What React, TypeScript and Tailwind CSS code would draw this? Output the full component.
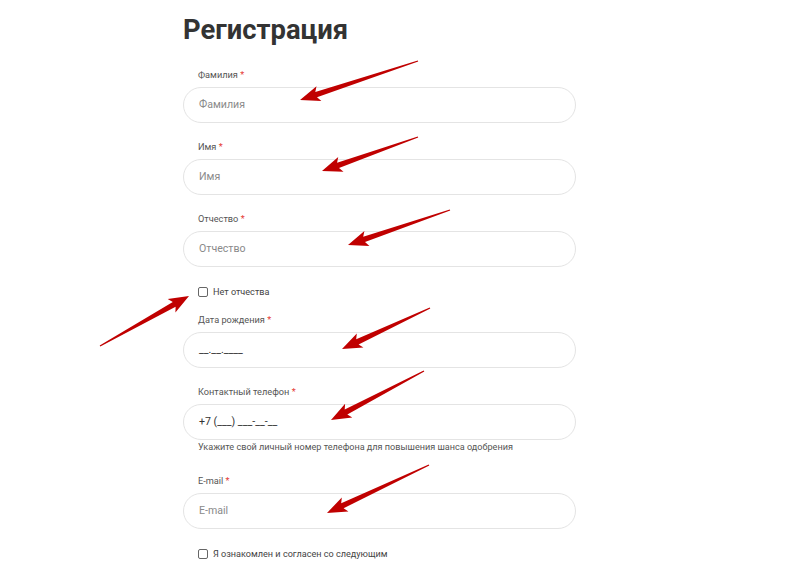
import React from 'react';

type Field = {
  label: string;
  placeholder?: string;
  value?: string;
};

const ARROWS: [number, number, number, number][] = [
  [418, 61, 300, 100],
  [418, 137, 322, 171],
  [450, 210, 348, 245],
  [100, 346, 189, 296],
  [430, 308, 342, 349],
  [424, 371, 331, 420],
  [429, 465, 327, 513],
];

// tapered red arrow: thin tail, thick shaft near a barbed head
function arrowPoints(x1: number, y1: number, x2: number, y2: number) {
  const dx = x2 - x1;
  const dy = y2 - y1;
  const len = Math.hypot(dx, dy);
  const ux = dx / len;
  const uy = dy / len;
  const nx = -uy;
  const ny = ux;
  const headLen = 17;
  const bx = x2 - ux * headLen;
  const by = y2 - uy * headLen;
  const p = (x: number, y: number) => `${x.toFixed(1)},${y.toFixed(1)}`;
  return [
    p(x1 + nx * 0.6, y1 + ny * 0.6),
    p(bx + nx * 2.8, by + ny * 2.8),
    p(bx - ux * 3 + nx * 7.8, by - uy * 3 + ny * 7.8),
    p(x2, y2),
    p(bx - ux * 3 - nx * 7.8, by - uy * 3 - ny * 7.8),
    p(bx - nx * 2.8, by - ny * 2.8),
    p(x1 - nx * 0.6, y1 - ny * 0.6),
  ].join(' ');
}

function Label({ text }: { text: string }) {
  return (
    <div className="pl-[15px] text-[9.2px] leading-[14px] text-[#555]">
      {text} <span className="text-[#e53935]">*</span>
    </div>
  );
}

function Input({ field }: { field: Field }) {
  return (
    <div className="mt-[5px] h-[36px] rounded-full border border-[#e4e4e4] bg-white pl-[15px] flex items-center text-[10.6px]">
      {field.value ? (
        <span className="text-[#333]">{field.value}</span>
      ) : (
        <span className="text-[#8a8a8a]">{field.placeholder}</span>
      )}
    </div>
  );
}

function Checkbox({ text }: { text: string }) {
  return (
    <div className="flex items-center gap-[5px] pl-[15px] text-[9.1px] leading-[14px] text-[#444]">
      <span className="w-[10px] h-[10px] rounded-[2px] border border-[#666] bg-white" />
      <span>{text}</span>
    </div>
  );
}

export default function App() {
  const top: Field[] = [
    { label: 'Фамилия', placeholder: 'Фамилия' },
    { label: 'Имя', placeholder: 'Имя' },
    { label: 'Отчество', placeholder: 'Отчество' },
  ];

  return (
    <div className="relative w-[800px] h-[575px] overflow-hidden bg-white" style={{ fontFamily: 'Roboto, "Noto Sans", sans-serif' }}>
      <div className="ml-[183px] w-[393px] pt-[13px]">
        <h1 className="text-[27.4px] leading-[34px] font-bold text-[#333]">Регистрация</h1>

        <div className="mt-[21px] flex flex-col gap-[17px]">
          {top.map((f) => (
            <div key={f.label}>
              <Label text={f.label} />
              <Input field={f} />
            </div>
          ))}
        </div>

        <div className="mt-[18px]">
          <Checkbox text="Нет отчества" />
        </div>

        <div className="mt-[14px]">
          <Label text="Дата рождения" />
          <Input field={{ label: 'Дата рождения', value: '__.__.____' }} />
        </div>

        <div className="mt-[17px]">
          <Label text="Контактный телефон" />
          <Input field={{ label: 'Контактный телефон', value: '+7 (___) ___-__-__' }} />
          <div className="pl-[15px] mt-[1px] text-[9.1px] leading-[12px] text-[#555]">
            Укажите свой личный номер телефона для повышения шанса одобрения
          </div>
        </div>

        <div className="mt-[21px]">
          <Label text="E-mail" />
          <Input field={{ label: 'E-mail', placeholder: 'E-mail' }} />
        </div>

        <div className="mt-[18px]">
          <Checkbox text="Я ознакомлен и согласен со следующим" />
        </div>
      </div>

      <svg className="absolute inset-0 pointer-events-none" width="800" height="575" viewBox="0 0 800 575">
        {ARROWS.map(([x1, y1, x2, y2], i) => (
          <polygon key={i} points={arrowPoints(x1, y1, x2, y2)} fill="#c00000" />
        ))}
      </svg>
    </div>
  );
}
